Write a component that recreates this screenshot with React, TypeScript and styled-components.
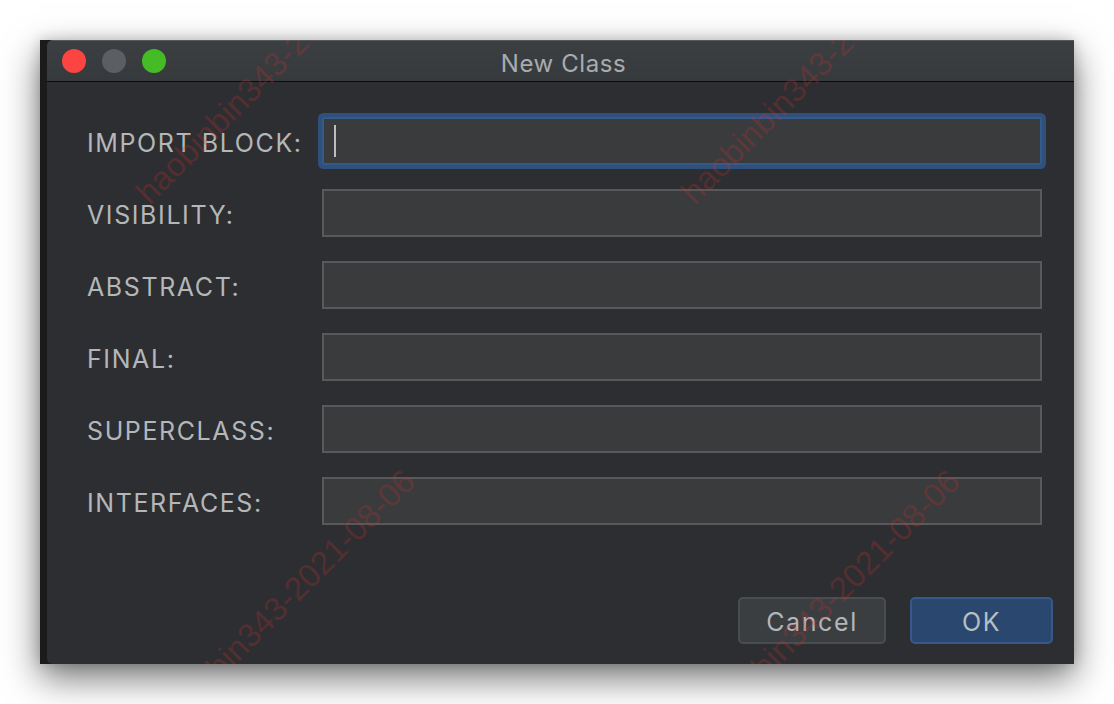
import React from "react";
import styled, { createGlobalStyle } from "styled-components";

const Global = createGlobalStyle`
  html, body { margin: 0; padding: 0; background: #ffffff; }
  body { font-family: Inter, "Liberation Sans", sans-serif; }
  * { box-sizing: border-box; }
`;

const Page = styled.div`
  width: 1114px;
  height: 704px;
  padding: 40px 0 0 40px;
  background: #ffffff;
`;

const Shot = styled.div`
  width: 1034px;
  height: 624px;
  display: flex;
  background: #1b1b1c;
  padding-left: 7px;
  box-shadow: 0 14px 34px rgba(0, 0, 0, 0.55), 0 0 12px rgba(0, 0, 0, 0.18);
`;

const Window = styled.div`
  position: relative;
  flex: 1;
  display: flex;
  flex-direction: column;
  background: #2c2e31;
  border-radius: 6px 0 0 6px;
  overflow: hidden;
`;

const TitleBar = styled.div`
  height: 42px;
  flex: none;
  display: flex;
  align-items: center;
  position: relative;
  background: linear-gradient(#3c3f42, #373a3d);
  border-top: 1px solid #56595c;
  border-bottom: 1px solid #0c0c0d;
`;

const Lights = styled.div`
  display: flex;
  gap: 16px;
  padding-left: 15px;
`;

const Light = styled.span<{ $c: string }>`
  width: 24px;
  height: 24px;
  border-radius: 50%;
  background: ${(p) => p.$c};
`;

const Title = styled.div`
  position: absolute;
  left: 6px;
  right: 0;
  top: 8px;
  text-align: center;
  font-size: 24px;
  letter-spacing: 0.6px;
  color: #a8acaf;
  pointer-events: none;
`;

const Body = styled.div`
  flex: 1;
  display: flex;
  flex-direction: column;
  padding: 35px 0 20px 40px;
`;

const Form = styled.div`
  display: grid;
  grid-template-columns: 235px 1fr;
  row-gap: 24px;
  padding-right: 32px;
`;

const Label = styled.label`
  height: 48px;
  display: flex;
  align-items: center;
  padding-top: 3px;
  font-size: 25px;
  letter-spacing: 1.6px;
  color: #b4b7b9;
  white-space: nowrap;
`;

const Field = styled.div<{ $focused?: boolean }>`
  height: 48px;
  position: relative;
  background: #393b3d;
  border: 2px solid ${(p) => (p.$focused ? "#34598b" : "#58595b")};
  border-radius: ${(p) => (p.$focused ? "2px" : "0")};
  box-shadow: ${(p) => (p.$focused ? "0 0 0 4px #30507c" : "none")};
`;

const Caret = styled.span`
  position: absolute;
  left: 10px;
  top: 6px;
  width: 2px;
  height: 32px;
  background: #bdbdbd;
`;

const Footer = styled.div`
  margin-top: auto;
  display: flex;
  justify-content: flex-end;
  gap: 24px;
  padding-right: 21px;
`;

const Button = styled.button<{ $primary?: boolean }>`
  height: 47px;
  width: ${(p) => (p.$primary ? "143px" : "148px")};
  border-radius: 5px;
  border: 2px solid ${(p) => (p.$primary ? "#36598a" : "#4a4d50")};
  background: ${(p) => (p.$primary ? "#2a4770" : "#3b3e41")};
  color: ${(p) => (p.$primary ? "#b9bec4" : "#b3b6b9")};
  font-family: Inter, "Liberation Sans", sans-serif;
  font-size: 25px;
  letter-spacing: 1.6px;
  padding: 2px 0 0;
`;

const Marks = styled.div`
  position: absolute;
  inset: 0;
  pointer-events: none;
  overflow: hidden;
`;

const Mark = styled.span`
  position: absolute;
  height: 40px;
  line-height: 40px;
  margin-top: -20px;
  font-family: "Liberation Sans", sans-serif;
  font-size: 33px;
  color: rgba(205, 48, 48, 0.25);
  white-space: nowrap;
  transform: rotate(-45deg);
  transform-origin: 0 50%;
`;

const fields = [
  "IMPORT BLOCK:",
  "VISIBILITY:",
  "ABSTRACT:",
  "FINAL:",
  "SUPERCLASS:",
  "INTERFACES:",
];

const markSpots = [
  [95, 158],
  [640, 158],
  [95, 703],
  [640, 703],
];

export default function App() {
  return (
    <>
      <Global />
      <Page>
        <Shot>
          <Window>
            <TitleBar>
              <Lights>
                <Light $c="#fc4542" />
                <Light $c="#5b5e62" />
                <Light $c="#45bc25" />
              </Lights>
              <Title>New Class</Title>
            </TitleBar>
            <Body>
              <Form>
                {fields.map((f, i) => (
                  <React.Fragment key={f}>
                    <Label>{f}</Label>
                    <Field $focused={i === 0}>{i === 0 && <Caret />}</Field>
                  </React.Fragment>
                ))}
              </Form>
              <Footer>
                <Button>Cancel</Button>
                <Button $primary>OK</Button>
              </Footer>
            </Body>
            <Marks>
              {markSpots.map(([x, y], i) => (
                <Mark key={i} style={{ left: x, top: y }}>
                  haobinbin343-2021-08-06
                </Mark>
              ))}
            </Marks>
          </Window>
        </Shot>
      </Page>
    </>
  );
}
